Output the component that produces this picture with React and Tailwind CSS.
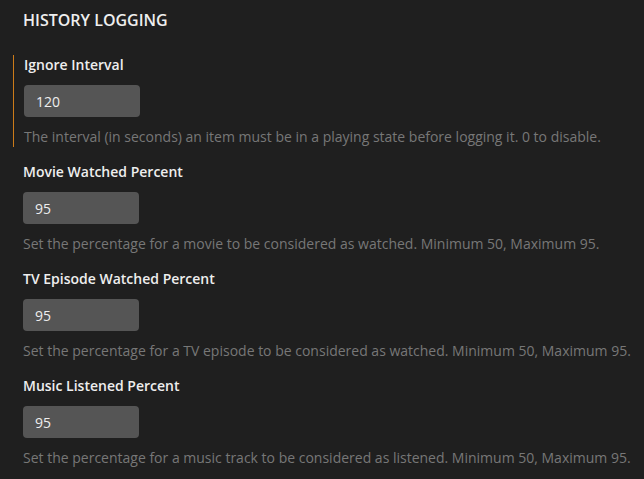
import React from "react";

const settings = [
  {
    label: "Ignore Interval",
    value: "120",
    help: "The interval (in seconds) an item must be in a playing state before logging it. 0 to disable.",
    active: true,
  },
  {
    label: "Movie Watched Percent",
    value: "95",
    help: "Set the percentage for a movie to be considered as watched. Minimum 50, Maximum 95.",
  },
  {
    label: "TV Episode Watched Percent",
    value: "95",
    help: "Set the percentage for a TV episode to be considered as watched. Minimum 50, Maximum 95.",
  },
  {
    label: "Music Listened Percent",
    value: "95",
    help: "Set the percentage for a music track to be considered as listened. Minimum 50, Maximum 95.",
  },
];

const Field = ({ label, value, help, active }) => (
  <div
    className={
      active
        ? "ml-[1px] flex flex-col border-l border-[#cc7b19] pl-[10px]"
        : "flex flex-col border-l border-transparent pl-[10px]"
    }
  >
    <label className="text-[14px] leading-[20px] font-semibold text-[#eeeeee]">
      {label}
    </label>
    <input
      type="text"
      defaultValue={value}
      className="mt-[10px] w-[116px] h-[32px] rounded-[4px] bg-[#555555] px-[12px] text-[14px] text-[#eeeeee] outline-none"
    />
    <p className="mt-[10px] text-[14px] leading-[20px] text-[#777777]">
      {help}
    </p>
  </div>
);

export default function App() {
  return (
    <div
      className="min-h-[479px] w-full bg-[#1f1f1f] pt-[8px] pl-[12px]"
      style={{ fontFamily: '"Open Sans", sans-serif' }}
    >
      {/* section header */}
      <h2 className="pl-[11px] text-[16px] leading-[24px] font-semibold text-[#eeeeee]">
        HISTORY LOGGING
      </h2>

      <div className="mt-[23px] flex flex-col gap-[15px]">
        {settings.map((s, i) => (
          <Field key={i} {...s} />
        ))}
      </div>
    </div>
  );
}
